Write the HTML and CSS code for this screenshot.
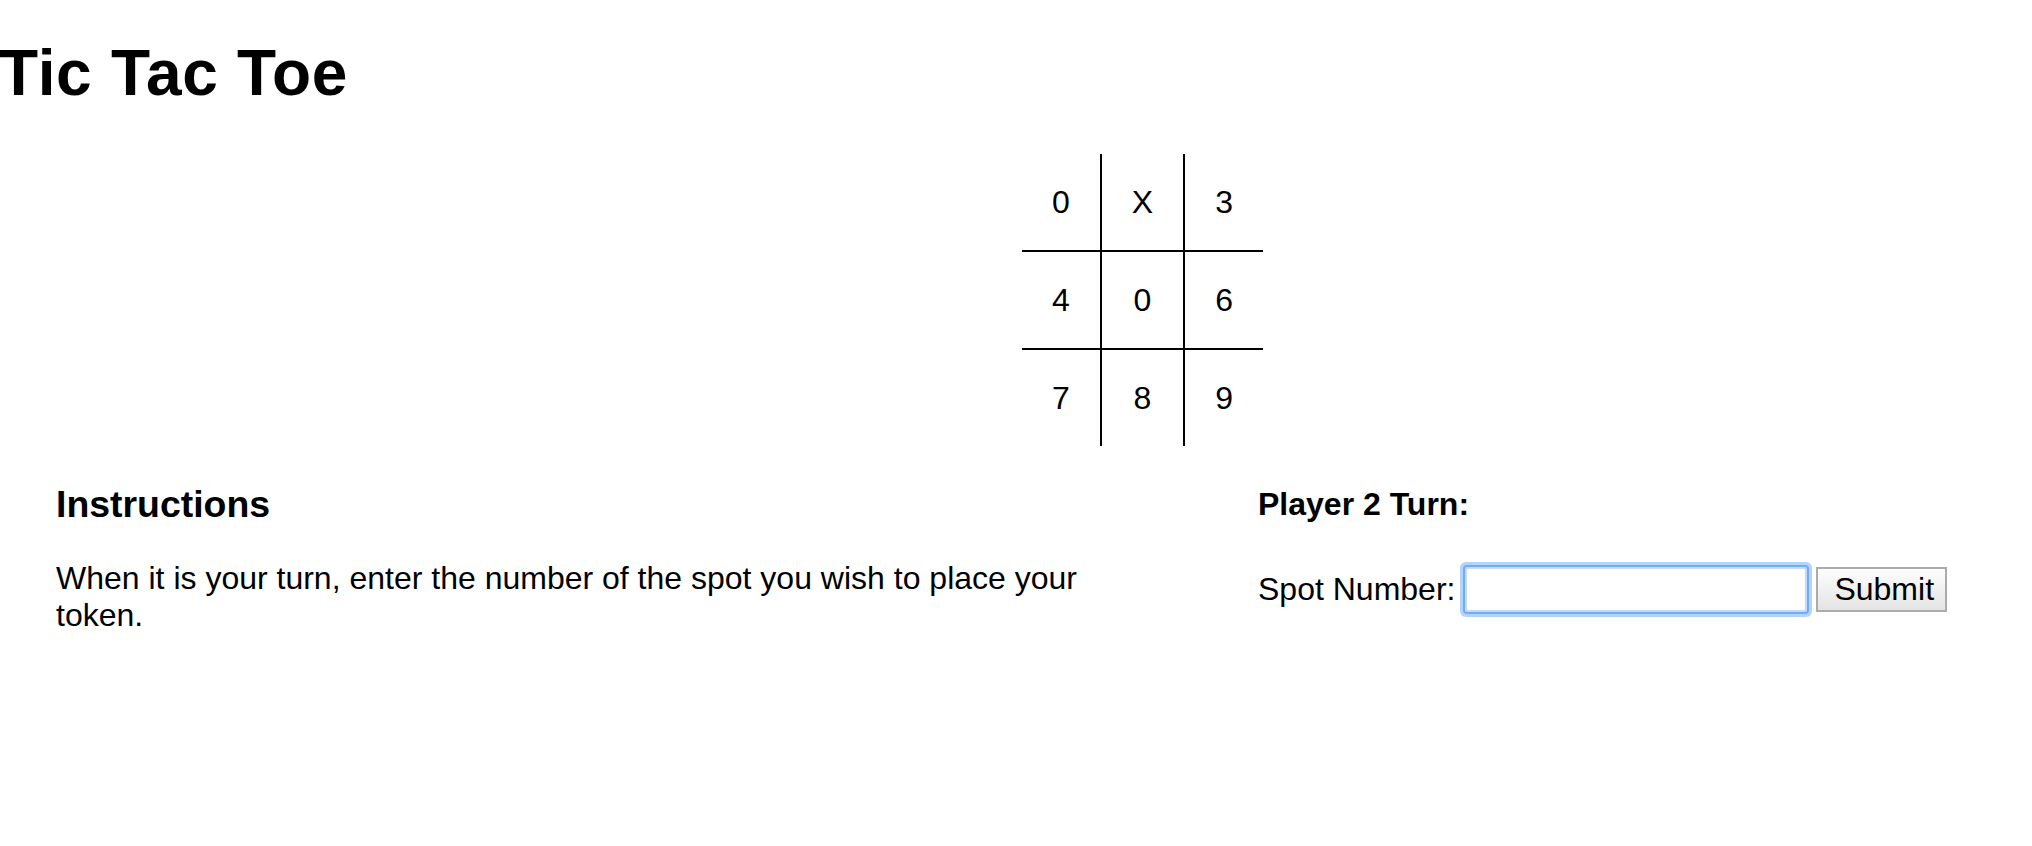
FILE: index.html
```html
<!DOCTYPE html>
<html lang="en">
<head>
<meta charset="utf-8">
<title>Tic Tac Toe</title>
<link rel="stylesheet" href="styles.css">
</head>
<body>
<h1 class="title">Tic Tac Toe</h1>
<div class="board-wrap">
  <table class="board">
    <tr><td>0</td><td class="mid">X</td><td>3</td></tr>
    <tr><td>4</td><td class="mid">0</td><td>6</td></tr>
    <tr class="last"><td>7</td><td class="mid">8</td><td>9</td></tr>
  </table>
</div>
<div class="lower">
  <section class="instructions">
    <h3 class="inst-title">Instructions</h3>
    <p class="inst-text">When it is your turn, enter the number of the spot you wish to place your token.</p>
  </section>
  <section class="turn">
    <h4 class="turn-title">Player 2 Turn:</h4>
    <form class="spot-form">
      <label class="spot-label" for="spot">Spot Number:</label>
      <input class="spot-input" id="spot" type="text">
      <button class="spot-btn" type="button">Submit</button>
    </form>
  </section>
</div>
</body>
</html>
```
FILE: styles.css
```css
html, body {
  background: #fff;
}
body {
  margin: 0;
  font-family: "Liberation Sans", Arial, Helvetica, sans-serif;
  font-size: 32px;
  color: #000;
}
.title {
  font-size: 64px;
  line-height: 74px;
  font-weight: bold;
  letter-spacing: 0.7px;
  margin: 36px 0 0 -1px;
}
.board-wrap {
  margin: 44px 0 0 1022px;
}
.board {
  border-collapse: collapse;
}
.board td {
  padding: 30px;
  line-height: 36px;
  text-align: center;
  border-bottom: 2px solid #000;
}
.board td.mid {
  border-left: 2px solid #000;
  border-right: 2px solid #000;
}
.board tr.last td {
  border-bottom: none;
}
.lower {
  display: flex;
  padding-left: 56px;
}
.instructions {
  width: 1100px;
}
.inst-title {
  font-size: 37.44px;
  line-height: 43px;
  font-weight: bold;
  margin: 37px 0 0;
}
.inst-text {
  margin: 34px 0 0;
  line-height: 37px;
}
.turn {
  margin-left: 102px;
}
.turn-title {
  font-size: 32px;
  line-height: 37px;
  font-weight: bold;
  margin: 40px 0 0;
}
.spot-form {
  display: flex;
  align-items: center;
  margin-top: 44px;
}
.spot-label {
  line-height: 37px;
}
.spot-input {
  box-sizing: border-box;
  width: 342px;
  height: 45px;
  margin: 0 0 0 10px;
  border: 2px solid #c2dbfa;
  border-radius: 2px;
  box-shadow: 0 0 0 2px #72acf3, 0 0 0 5px #b4d3fa;
  outline: none;
  background: #fff;
  font: inherit;
}
.spot-btn {
  box-sizing: border-box;
  width: 131px;
  height: 45px;
  margin-left: 9px;
  padding: 0 12px 0 16px;
  border: 2px solid #ababab;
  border-radius: 0;
  background: linear-gradient(#fdfdfd, #e4e4e4);
  font: inherit;
  font-size: 32px;
  line-height: 37px;
  color: #000;
  text-align: center;
}
```
